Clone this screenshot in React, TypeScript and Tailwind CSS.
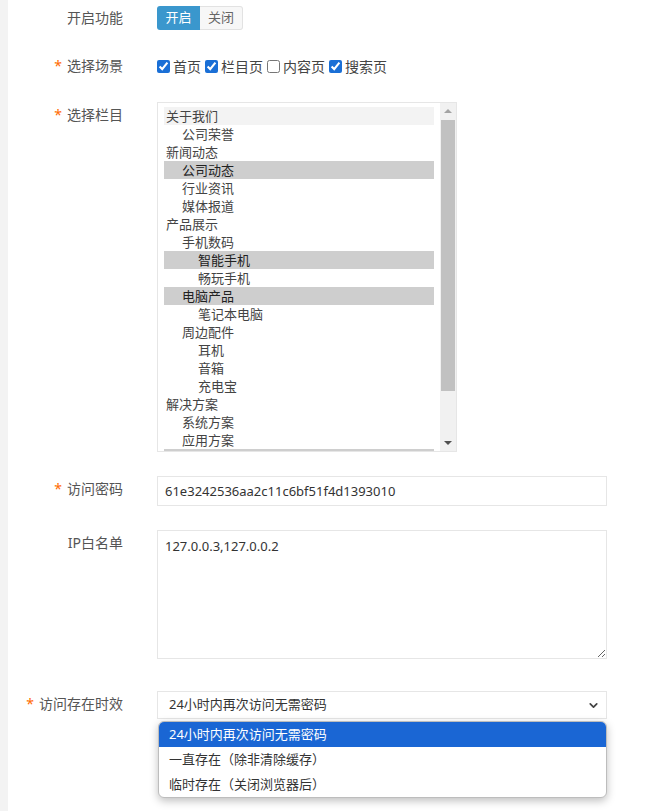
import { ChevronDown } from "lucide-react";

type Item = { label: string; level: number; selected?: boolean; hover?: boolean };

const columns: Item[] = [
  { label: "关于我们", level: 0, hover: true },
  { label: "公司荣誉", level: 1 },
  { label: "新闻动态", level: 0 },
  { label: "公司动态", level: 1, selected: true },
  { label: "行业资讯", level: 1 },
  { label: "媒体报道", level: 1 },
  { label: "产品展示", level: 0 },
  { label: "手机数码", level: 1 },
  { label: "智能手机", level: 2, selected: true },
  { label: "畅玩手机", level: 2 },
  { label: "电脑产品", level: 1, selected: true },
  { label: "笔记本电脑", level: 2 },
  { label: "周边配件", level: 1 },
  { label: "耳机", level: 2 },
  { label: "音箱", level: 2 },
  { label: "充电宝", level: 2 },
  { label: "解决方案", level: 0 },
  { label: "系统方案", level: 1 },
  { label: "应用方案", level: 1 },
];

const scenes = [
  { label: "首页", checked: true },
  { label: "栏目页", checked: true },
  { label: "内容页", checked: false },
  { label: "搜索页", checked: true },
];

const options = ["24小时内再次访问无需密码", "一直存在（除非清除缓存）", "临时存在（关闭浏览器后）"];

function Label({ text, required, top = 4 }: { text: string; required?: boolean; top?: number }) {
  return (
    <div
      className="w-[115px] shrink-0 text-right text-[14px] leading-[18px] text-[#555]"
      style={{ paddingTop: top }}
    >
      {required && <span className="mr-[5px] text-[#ff6a00]">*</span>}
      {text}
    </div>
  );
}

export default function App() {
  return (
    <div className="flex h-[811px] overflow-hidden bg-white font-['Noto_Sans','Noto_Sans_CJK_SC',sans-serif]">
      <div className="w-[8px] shrink-0 bg-[#f3f3f3]" />
      <div className="flex-1 pr-[43px]">
        {/* 开启功能 */}
        <div className="mt-[6px] flex gap-[34px]">
          <Label text="开启功能" top={3} />
          <div className="flex h-[24px] text-[13px]">
            <button className="w-[43px] rounded-l-[3px] bg-[#3a97cd] text-white">开启</button>
            <button className="w-[43px] rounded-r-[3px] border border-l-0 border-[#e2e2e2] bg-[#f7f7f7] text-[#666]">
              关闭
            </button>
          </div>
        </div>

        {/* 选择场景 */}
        <div className="mt-[27px] flex gap-[34px]">
          <Label text="选择场景" required top={0} />
          <div className="flex h-[18px] items-center text-[14px] text-[#444]">
            {scenes.map((s) => (
              <label key={s.label} className="mr-[4px] flex items-center">
                <input
                  type="checkbox"
                  defaultChecked={s.checked}
                  className="m-0 mr-[3px] h-[13px] w-[13px] accent-[#1a6fd6]"
                />
                {s.label}
              </label>
            ))}
          </div>
        </div>

        {/* 选择栏目 */}
        <div className="mt-[27px] flex gap-[34px]">
          <Label text="选择栏目" required />
          <div className="relative flex h-[350px] w-[300px] overflow-hidden border border-[#e6e6e6] bg-white">
            <div className="flex-1 pl-[6px] pr-[6px] pt-[4px]">
              {columns.map((c) => (
                <div
                  key={c.label}
                  className={
                    "h-[18px] text-[13px] leading-[18px] " +
                    (c.selected ? "bg-[#cecece] text-[#222]" : c.hover ? "bg-[#f3f3f3] text-[#444]" : "text-[#444]")
                  }
                  style={{ paddingLeft: 2 + c.level * 16 }}
                >
                  {c.label}
                </div>
              ))}
              {/* next selected row, scrolled out of view */}
              <div className="h-[18px] bg-[#cecece]" />
            </div>
            <div className="relative w-[16px] shrink-0 bg-[#f1f1f1]">
              <div className="absolute left-1/2 top-[6px] h-0 w-0 -translate-x-1/2 border-x-[4px] border-b-[4px] border-x-transparent border-b-[#a3a3a3]" />
              <div className="absolute left-[1px] right-[1px] top-[17px] h-[271px] bg-[#c1c1c1]" />
              <div className="absolute bottom-[6px] left-1/2 h-0 w-0 -translate-x-1/2 border-x-[4px] border-t-[4px] border-x-transparent border-t-[#505050]" />
            </div>
          </div>
        </div>

        {/* 访问密码 */}
        <div className="mt-[24px] flex gap-[34px]">
          <Label text="访问密码" required />
          <input
            defaultValue="61e3242536aa2c11c6bf51f4d1393010"
            className="h-[30px] flex-1 border border-[#e6e6e6] px-[7px] text-[13px] text-[#333] outline-none"
          />
        </div>

        {/* IP白名单 */}
        <div className="mt-[24px] flex gap-[34px]">
          <Label text="IP白名单" />
          <textarea
            defaultValue="127.0.0.3,127.0.0.2"
            className="h-[129px] flex-1 border border-[#e6e6e6] px-[7px] py-[5px] text-[13px] leading-[20px] text-[#333] outline-none"
          />
        </div>

        {/* 访问存在时效 */}
        <div className="mt-[32px] flex gap-[34px]">
          <Label text="访问存在时效" required />
          <div className="relative flex-1">
            <div className="flex h-[28px] items-center justify-between border border-[#e6e6e6] pl-[11px] pr-[6px] text-[13px] text-[#333]">
              <span>24小时内再次访问无需密码</span>
              <ChevronDown size={13} strokeWidth={3.2} className="text-[#444]" />
            </div>
            <div className="absolute left-[1px] right-0 top-[30px] overflow-hidden rounded-[6px] border border-[#bdbdbd] bg-white shadow-[0_3px_8px_rgba(0,0,0,0.25)]">
              {options.map((o, i) => (
                <div
                  key={o}
                  className={
                    "h-[25px] pl-[10px] text-[13px] leading-[25px] " +
                    (i === 0 ? "bg-[#1a66d4] text-white" : "text-[#333]")
                  }
                >
                  {o}
                </div>
              ))}
            </div>
          </div>
        </div>
      </div>
    </div>
  );
}
